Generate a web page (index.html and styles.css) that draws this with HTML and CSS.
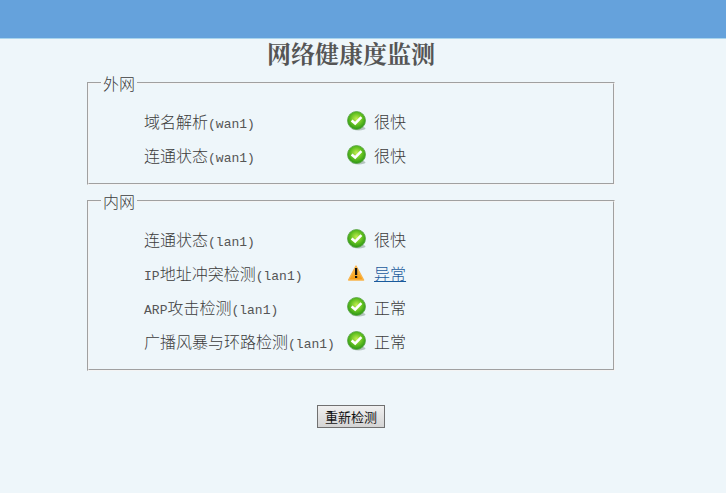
FILE: index.html
```
<!DOCTYPE html>
<html lang="zh-CN">
<head>
<meta charset="utf-8">
<title>网络健康度监测</title>
<link rel="stylesheet" href="styles.css">
</head>
<body>
<svg class="sprites" aria-hidden="true">
  <defs>
    <radialGradient id="green" cx="50%" cy="42%" r="60%">
      <stop offset="0" stop-color="#c4ee50"/>
      <stop offset=".55" stop-color="#62c020"/>
      <stop offset="1" stop-color="#249013"/>
    </radialGradient>
    <linearGradient id="amber" x1="0" y1="0" x2="0" y2="1">
      <stop offset="0" stop-color="#ffc455"/>
      <stop offset="1" stop-color="#f69c12"/>
    </linearGradient>
    <symbol id="ok" viewBox="0 0 20 20">
      <ellipse cx="11.5" cy="17.4" rx="7" ry="2" fill="#8ea397" opacity=".6"/>
      <circle cx="9.5" cy="9.5" r="9" fill="url(#green)" stroke="#5aa545" stroke-width=".8"/>
      <path d="M4.6 9.4 8.2 12.4 14.4 6.2" fill="none" stroke="#fff" stroke-width="2.6"/>
    </symbol>
    <symbol id="warn" viewBox="0 0 20 20">
      <path d="M9 3 1.6 17H16.6Z" fill="url(#amber)" stroke="#f9b44b" stroke-width="1.4" stroke-linejoin="round"/>
      <path d="M8 5h2.2v7H8zM8 13h2.2v2H8z" fill="#111"/>
    </symbol>
  </defs>
</svg>
<header class="topbar"></header>
<main class="page">
  <h1 class="title">网络健康度监测</h1>
  <fieldset class="group">
    <legend>外网</legend>
    <table class="checks">
      <tr><th scope="row">域名解析<span class="latin">(wan1)</span></th><td class="state"><svg class="icon" aria-hidden="true"><use href="#ok"/></svg></td><td>很快</td></tr>
      <tr><th scope="row">连通状态<span class="latin">(wan1)</span></th><td class="state"><svg class="icon" aria-hidden="true"><use href="#ok"/></svg></td><td>很快</td></tr>
    </table>
  </fieldset>
  <fieldset class="group">
    <legend>内网</legend>
    <table class="checks">
      <tr><th scope="row">连通状态<span class="latin">(lan1)</span></th><td class="state"><svg class="icon" aria-hidden="true"><use href="#ok"/></svg></td><td>很快</td></tr>
      <tr><th scope="row"><span class="latin">IP</span>地址冲突检测<span class="latin">(lan1)</span></th><td class="state"><svg class="icon" aria-hidden="true"><use href="#warn"/></svg></td><td><a href="#">异常</a></td></tr>
      <tr><th scope="row"><span class="latin">ARP</span>攻击检测<span class="latin">(lan1)</span></th><td class="state"><svg class="icon" aria-hidden="true"><use href="#ok"/></svg></td><td>正常</td></tr>
      <tr><th scope="row">广播风暴与环路检测<span class="latin">(lan1)</span></th><td class="state"><svg class="icon" aria-hidden="true"><use href="#ok"/></svg></td><td>正常</td></tr>
    </table>
  </fieldset>
  <button class="retry" type="button">重新检测</button>
</main>
</body>
</html>
```
FILE: styles.css
```
* { box-sizing: border-box; }

body {
  margin: 0;
  background: #eef6fa;
  color: #3c3c3c;
  font: 300 16px/20px "Noto Sans CJK SC", sans-serif;
}

.sprites { position: absolute; width: 0; height: 0; }

.topbar {
  height: 39px;
  background: #65a2dc;
  border-bottom: 1px solid #a9d5ee;
}

.page {
  display: flex;
  flex-direction: column;
  align-items: center;
  padding-right: 24px;
}

.title {
  margin: 0 0 6px;
  color: #555;
  font-family: "Noto Serif CJK SC", "Noto Sans CJK SC", serif;
  font-size: 24px;
  line-height: 28px;
  font-weight: 700;
}

.group {
  width: 75.2%;
  min-width: 480px;
  margin: 0 0 6px;
  padding: 13px 12px 9px;
  border: 2px groove #f4f4f4;
}

.group legend { padding: 0 2px; }

.checks {
  margin-left: 43px;
  border-collapse: collapse;
}

.checks th,
.checks td {
  height: 34px;
  padding: 0 0 4px;
  font-weight: 300;
  text-align: left;
  white-space: nowrap;
}

.checks th { width: 203px; }
.checks .state { width: 27px; }

.latin {
  color: #555;
  font-family: "Liberation Mono", monospace;
  font-size: 13px;
  line-height: 13px;
  font-weight: 400;
}

.icon {
  display: block;
  width: 20px;
  height: 20px;
}

.checks a { color: #1a5a9c; }

.retry {
  margin-top: 28px;
  padding: 0 7px;
  border: 1px solid #707070;
  background: linear-gradient(#f0f0f0, #d4d4d4);
  color: #111;
  font: 400 13px/21px "Noto Sans CJK SC", sans-serif;
}
```
